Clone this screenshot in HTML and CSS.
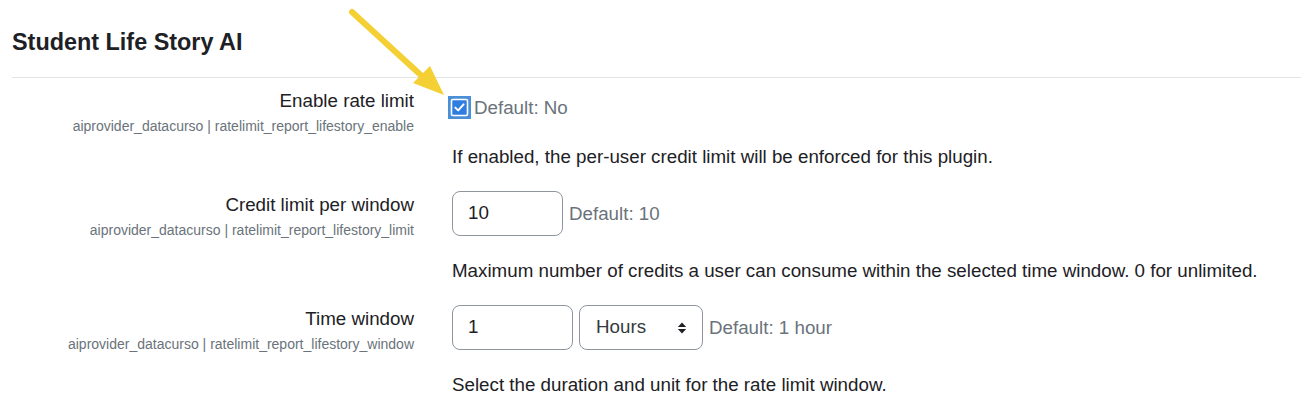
FILE: index.html
```html
<!DOCTYPE html>
<html lang="en">
<head>
<meta charset="utf-8">
<title>Student Life Story AI</title>
<link rel="stylesheet" href="styles.css">
</head>
<body>
<div class="page">
  <h3 class="section-title">Student Life Story AI</h3>
  <div class="divider"></div>

  <div class="setting setting-first">
    <div class="setting-label">
      <div class="label">Enable rate limit</div>
      <div class="shortname">aiprovider_datacurso | ratelimit_report_lifestory_enable</div>
    </div>
    <div class="setting-body">
      <div class="control-line checkbox-line">
        <span class="checkbox">
          <svg width="23" height="23" viewBox="0 0 23 23">
            <rect x="0" y="0" width="23" height="23" fill="#4a8fd8"/>
            <rect x="3.5" y="3.5" width="16" height="16" rx="1.5" fill="#2f7de1" stroke="#ffffff" stroke-width="1.6"/>
            <path d="M7.3 11.6 L10.2 14.4 L15.6 8.4" fill="none" stroke="#ffffff" stroke-width="2" stroke-linecap="round" stroke-linejoin="round"/>
          </svg>
        </span>
        <span class="default">Default: No</span>
      </div>
      <div class="description">If enabled, the per-user credit limit will be enforced for this plugin.</div>
    </div>
  </div>

  <div class="setting">
    <div class="setting-label">
      <div class="label">Credit limit per window</div>
      <div class="shortname">aiprovider_datacurso | ratelimit_report_lifestory_limit</div>
    </div>
    <div class="setting-body">
      <div class="control-line">
        <div class="text-input w-narrow">10</div>
        <span class="default">Default: 10</span>
      </div>
      <div class="description">Maximum number of credits a user can consume within the selected time window. 0 for unlimited.</div>
    </div>
  </div>

  <div class="setting">
    <div class="setting-label">
      <div class="label">Time window</div>
      <div class="shortname">aiprovider_datacurso | ratelimit_report_lifestory_window</div>
    </div>
    <div class="setting-body">
      <div class="control-line">
        <div class="text-input w-wide">1</div>
        <div class="select">
          <span>Hours</span>
          <svg class="select-arrows" width="10" height="14" viewBox="0 0 10 14">
            <path d="M5 1.5 L9.2 6 L0.8 6 Z" fill="#1d2125"/>
            <path d="M5 12.5 L9.2 8 L0.8 8 Z" fill="#1d2125"/>
          </svg>
        </div>
        <span class="default">Default: 1 hour</span>
      </div>
      <div class="description">Select the duration and unit for the rate limit window.</div>
    </div>
  </div>

  <svg class="annotation-arrow" width="110" height="100" viewBox="0 0 110 100">
    <line x1="12" y1="12" x2="84" y2="78" stroke="#f4d035" stroke-width="6" stroke-linecap="round"/>
    <polygon points="73,83 90,66 104,95" fill="#f4d035"/>
  </svg>
</div>
</body>
</html>
```

FILE: styles.css
```css
html, body {
  margin: 0;
  padding: 0;
  background: #ffffff;
}

body {
  font-family: "Liberation Sans", Arial, sans-serif;
  color: #1d2125;
  font-size: 18.75px;
  line-height: 1.5;
}

.page {
  position: relative;
  padding: 0 0 0 12px;
}

.section-title {
  margin: 0;
  padding-top: 28px;
  font-size: 23.4px;
  line-height: 28px;
  font-weight: 700;
  color: #1d2125;
}

.divider {
  margin-top: 21px;
  border-top: 1px solid #e2e5e8;
}

.setting {
  display: grid;
  grid-template-columns: 402px 1fr;
  column-gap: 38px;
  padding-bottom: 20px;
}

.setting-first {
  padding-top: 9px;
}

.setting-label {
  text-align: right;
}

.label {
  font-size: 18.75px;
  line-height: 28px;
  color: #1d2125;
}

.shortname {
  font-size: 14px;
  line-height: 22px;
  color: #6a737b;
}

.control-line {
  display: flex;
  align-items: center;
  gap: 6px;
}

.checkbox-line {
  margin-top: 8px;
  margin-left: -4px;
  gap: 3px;
  height: 24px;
}

.checkbox {
  display: block;
  width: 23px;
  height: 23px;
}

.checkbox svg {
  display: block;
}

.default {
  color: #6a737b;
  font-size: 18.75px;
  line-height: 28px;
}

.checkbox-line .default {
  position: relative;
  top: 1px;
}

.description {
  margin-top: 21px;
  line-height: 28px;
}

.checkbox-line + .description {
  margin-top: 24px;
}

.text-input,
.select {
  box-sizing: border-box;
  height: 45px;
  border: 1px solid #8f959e;
  border-radius: 8px;
  padding: 0 15px;
  display: flex;
  align-items: center;
  font-size: 18.75px;
  color: #1d2125;
  background: #ffffff;
}

.w-narrow {
  width: 111px;
}

.w-wide {
  width: 121px;
}

.select {
  width: 124px;
  justify-content: space-between;
  padding-right: 15px;
  padding-left: 16px;
  color: #343a40;
}

.select-arrows {
  display: block;
}

.annotation-arrow {
  position: absolute;
  left: 340px;
  top: 0;
  overflow: visible;
}
```
